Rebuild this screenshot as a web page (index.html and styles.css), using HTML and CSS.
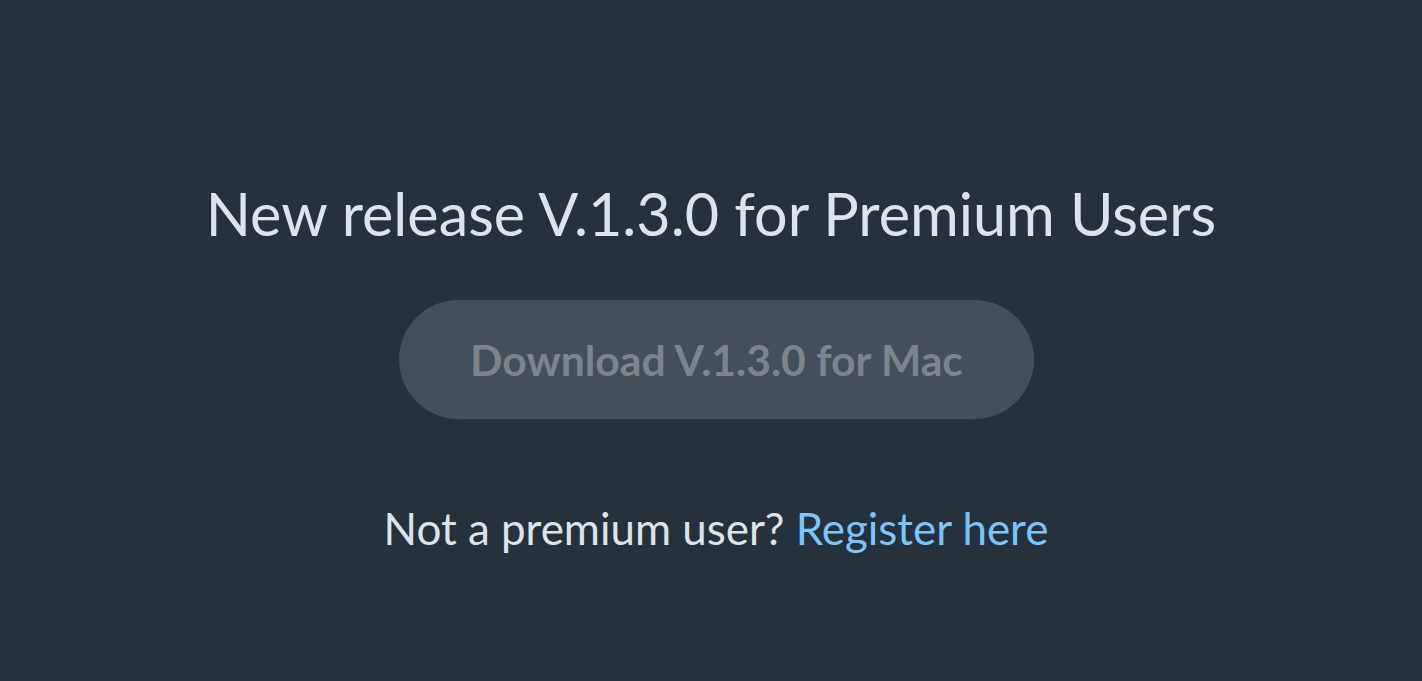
FILE: index.html
```html
<!DOCTYPE html>
<html lang="en">
<head>
<meta charset="utf-8">
<title>New release</title>
<link rel="stylesheet" href="styles.css">
</head>
<body>
<main class="page">
  <h1 class="title">New release V.1.3.0 for Premium Users</h1>
  <button class="download" type="button" disabled>Download V.1.3.0 for Mac</button>
  <p class="register">Not a premium user? <a href="#" class="register-link">Register here</a></p>
</main>
</body>
</html>
```
FILE: styles.css
```css
html, body {
  margin: 0;
  padding: 0;
  height: 100%;
  background: #25313d;
}
.page {
  display: flex;
  flex-direction: column;
  align-items: center;
  padding-top: 177px;
  font-family: "Lato", "Open Sans", sans-serif;
}
.title {
  margin: 0;
  font-size: 59.3px;
  line-height: 72px;
  font-weight: 400;
  color: #dde3ea;
}
.download {
  margin-top: 51px;
  margin-left: 11px;
  width: 635px;
  height: 119px;
  border: none;
  border-radius: 60px;
  background: #434f5a;
  color: #7c858e;
  font-family: inherit;
  font-size: 42.7px;
  font-weight: 700;
  padding: 0;
}
.register {
  margin: 84px 0 0 10px;
  font-size: 43.9px;
  line-height: 50px;
  color: #dde3ea;
}
.register-link {
  color: #7cc4fa;
  text-decoration: none;
}
```
